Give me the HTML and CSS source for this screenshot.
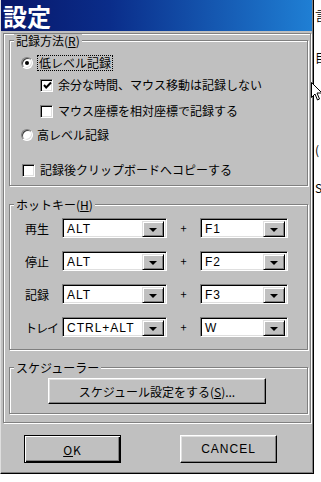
FILE: index.html
```html
<!DOCTYPE html>
<html lang="ja">
<head>
    <meta charset="UTF-8">
    <title>設定</title>
    <link rel="stylesheet" href="styles.css">
</head>
<body>
    <div class="window">
        <div class="titlebar"><span class="title">設定</span></div>

        <div class="panel">
            <!-- 記録方法 -->
            <fieldset class="group group-record">
                <legend>記録方法(<u>R</u>)</legend>
                <div class="row row-1">
                    <span class="radio checked"></span>
                    <span class="focus">低レベル記録</span>
                </div>
                <div class="row row-2 indent">
                    <span class="check">
                        <svg width="9" height="9" viewBox="0 0 9 9"><polyline points="1,4 3.2,6.5 8,1.5" fill="none" stroke="#000" stroke-width="2"/></svg>
                    </span>
                    <span class="text">余分な時間、マウス移動は記録しない</span>
                </div>
                <div class="row row-3 indent">
                    <span class="check"></span>
                    <span class="text">マウス座標を相対座標で記録する</span>
                </div>
                <div class="row row-4">
                    <span class="radio"></span>
                    <span class="text">高レベル記録</span>
                </div>
                <div class="row row-5">
                    <span class="check"></span>
                    <span class="text">記録後クリップボードへコピーする</span>
                </div>
            </fieldset>

            <!-- ホットキー -->
            <fieldset class="group group-hotkey">
                <legend>ホットキー(<u>H</u>)</legend>
                <div class="hotkey">
                    <span class="key-label">再生</span>
                    <div class="combo combo-mod"><span class="value">ALT</span><span class="drop"><i></i></span></div>
                    <span class="plus">+</span>
                    <div class="combo combo-key"><span class="value">F1</span><span class="drop"><i></i></span></div>
                </div>
                <div class="hotkey">
                    <span class="key-label">停止</span>
                    <div class="combo combo-mod"><span class="value">ALT</span><span class="drop"><i></i></span></div>
                    <span class="plus">+</span>
                    <div class="combo combo-key"><span class="value">F2</span><span class="drop"><i></i></span></div>
                </div>
                <div class="hotkey">
                    <span class="key-label">記録</span>
                    <div class="combo combo-mod"><span class="value">ALT</span><span class="drop"><i></i></span></div>
                    <span class="plus">+</span>
                    <div class="combo combo-key"><span class="value">F3</span><span class="drop"><i></i></span></div>
                </div>
                <div class="hotkey">
                    <span class="key-label">トレイ</span>
                    <div class="combo combo-mod"><span class="value">CTRL+ALT</span><span class="drop"><i></i></span></div>
                    <span class="plus">+</span>
                    <div class="combo combo-key"><span class="value">W</span><span class="drop"><i></i></span></div>
                </div>
            </fieldset>

            <!-- スケジューラー -->
            <fieldset class="group group-schedule">
                <legend>スケジューラー</legend>
                <button class="btn btn-schedule">スケジュール設定をする(<u>S</u>)...</button>
            </fieldset>
        </div>

        <div class="actions">
            <button class="btn btn-default"><u>O</u>K</button>
            <button class="btn btn-cancel">CANCEL</button>
        </div>
    </div>

    <!-- window behind, mostly hidden -->
    <div class="behind">
        <div class="frag f1">言</div>
        <div class="frag f2">目</div>
        <div class="frag f3">(</div>
        <div class="frag f4">S</div>
    </div>

    <svg class="cursor" width="12" height="19" viewBox="0 0 12 19">
        <path d="M0.5 0.5 L0.5 15.5 L4 12 L6.5 18 L8.5 17 L6 11 L11 11 Z" fill="#fff" stroke="#000" stroke-width="1"/>
    </svg>
</body>
</html>
```

FILE: styles.css
```css
body {
    margin: 0;
    background: #fff;
    display: flex;
    align-items: flex-start;
    font-family: "Noto Sans CJK JP", "DejaVu Sans", sans-serif;
    font-size: 12px;
    color: #000;
    overflow: hidden;
}

.window {
    width: 314px;
    height: 474px;
    box-sizing: border-box;
    flex-shrink: 0;
    background: #c0c0c0;
    border-left: 1px solid #dfdfdf;
    border-right: 1px solid #000;
    border-bottom: 1px solid #000;
    box-shadow: inset -1px -1px 0 #808080;
    padding-right: 1px;
}

.titlebar {
    height: 31px;
    display: flex;
    align-items: center;
    background: linear-gradient(to right, #08176a, #0a2d8a 35%, #1f7fd4);
    color: #fff;
    padding-left: 2px;
}

.title {
    font-size: 24px;
    font-weight: bold;
    line-height: 28px;
}

.panel {
    margin: 2px 0 0 2px;
    width: 308px;
    box-sizing: border-box;
    border: 1px solid #808080;
    box-shadow: inset 1px 1px 0 #fff, 1px 1px 0 #fff;
    padding: 0 0 8px 5px;
}

/* etched group boxes */
.group {
    margin: 0;
    width: 299px;
    box-sizing: border-box;
    padding: 0;
    border: 1px solid #808080;
    box-shadow: inset 1px 1px 0 #fff, 1px 1px 0 #fff;
}

.group legend {
    margin-left: 4px;
    padding: 0 2px;
    height: 13px;
    line-height: 13px;
    background: #c0c0c0;
}

.group-hotkey {
    margin-top: 12px;
    padding-bottom: 12px;
}

.group-schedule {
    margin-top: 11px;
    padding-bottom: 9px;
}

.group-record {
    padding-bottom: 7px;
}

/* option rows */
.row {
    display: flex;
    align-items: center;
    height: 16px;
    padding-left: 11px;
}

.row.indent {
    padding-left: 30px;
}

.row-1 { margin-top: 8px; }
.row-2 { margin-top: 6px; }
.row-3 { margin-top: 10px; }
.row-4 { margin-top: 8px; }
.row-5 { margin-top: 19px; padding-left: 12px; }

.row .text {
    margin-left: 5px;
    line-height: 16px;
}

.row-1 .focus,
.row-4 .text {
    margin-left: 4px;
}

.focus {
    border: 1px dotted #000;
    padding: 0 1px;
    line-height: 14px;
}

.radio {
    width: 12px;
    height: 12px;
    box-sizing: border-box;
    border-radius: 50%;
    background: #fff;
    border: 1px solid;
    border-color: #808080 #fff #fff #808080;
    box-shadow: inset 1px 1px 0 #404040, inset -1px -1px 0 #dfdfdf;
    display: flex;
    align-items: center;
    justify-content: center;
}

.radio.checked::after {
    content: "";
    width: 4px;
    height: 4px;
    border-radius: 50%;
    background: #000;
}

.check {
    width: 13px;
    height: 13px;
    box-sizing: border-box;
    background: #fff;
    border: 1px solid;
    border-color: #808080 #fff #fff #808080;
    box-shadow: inset 1px 1px 0 #000, inset -1px -1px 0 #dfdfdf;
    display: flex;
    align-items: center;
    justify-content: center;
}

.check svg {
    display: block;
    margin: 1px 0 0 1px;
}

/* hotkey rows */
.hotkey {
    display: flex;
    align-items: center;
    height: 20px;
    margin-top: 13px;
    padding-left: 15px;
}

.hotkey:first-of-type {
    margin-top: 7px;
}

.key-label {
    width: 37px;
    font-size: 12px;
}

.hotkey:last-child .key-label {
    letter-spacing: -1px;
}

.plus {
    width: 33px;
    text-align: center;
    font-size: 11px;
}

.combo {
    display: flex;
    height: 20px;
    box-sizing: border-box;
    background: #fff;
    border: 1px solid;
    border-color: #808080 #fff #fff #808080;
    box-shadow: inset 1px 1px 0 #000, inset -1px -1px 0 #dfdfdf;
    padding: 2px;
}

.combo-mod { width: 105px; }
.combo-key { width: 88px; }

.combo .value {
    flex: 1;
    line-height: 16px;
    padding-left: 2px;
    letter-spacing: 1px;
    font-family: "Liberation Sans", "Noto Sans CJK JP", sans-serif;
    font-size: 12px;
}

.drop {
    width: 22px;
    height: 16px;
    box-sizing: border-box;
    background: #c0c0c0;
    border: 1px solid;
    border-color: #dfdfdf #000 #000 #dfdfdf;
    box-shadow: inset 1px 1px 0 #fff, inset -1px -1px 0 #808080;
    display: flex;
    align-items: center;
    justify-content: center;
}

.drop i {
    width: 0;
    height: 0;
    border-left: 4px solid transparent;
    border-right: 4px solid transparent;
    border-top: 4px solid #000;
    margin-top: 1px;
}

/* buttons */
.btn {
    display: block;
    font-family: "Noto Sans CJK JP", sans-serif;
    font-size: 12px;
    color: #000;
    background: #c0c0c0;
    box-sizing: border-box;
    padding: 0;
    border: 1px solid;
    border-color: #fff #000 #000 #fff;
    box-shadow: inset -1px -1px 0 #808080, inset 1px 1px 0 #dfdfdf;
}

.btn-schedule {
    margin: 4px 0 0 38px;
    width: 218px;
    height: 26px;
}

.actions {
    display: flex;
    margin-top: 12px;
    padding-left: 23px;
}

.btn-default,
.btn-cancel {
    width: 97px;
    height: 28px;
    letter-spacing: 1px;
}

.btn-default {
    border-color: #000;
    box-shadow: inset 1px 1px 0 #fff, inset -1px -1px 0 #000, inset -2px -2px 0 #808080;
}

.btn-cancel {
    margin-left: 59px;
    font-family: "Liberation Sans", sans-serif;
}

/* background window peeking out */
.behind {
    width: 7px;
    height: 482px;
    overflow: hidden;
    margin-left: 1px;
    display: flex;
    flex-direction: column;
}

.frag {
    height: 16px;
    line-height: 16px;
    white-space: nowrap;
    font-size: 12px;
}

.f1 { margin-top: 8px; }
.f2 { margin-top: 26px; }
.f3 { margin-top: 76px; }
.f4 { margin-top: 22px; }

.cursor {
    position: absolute;
    left: 311px;
    top: 82px;
}
```
